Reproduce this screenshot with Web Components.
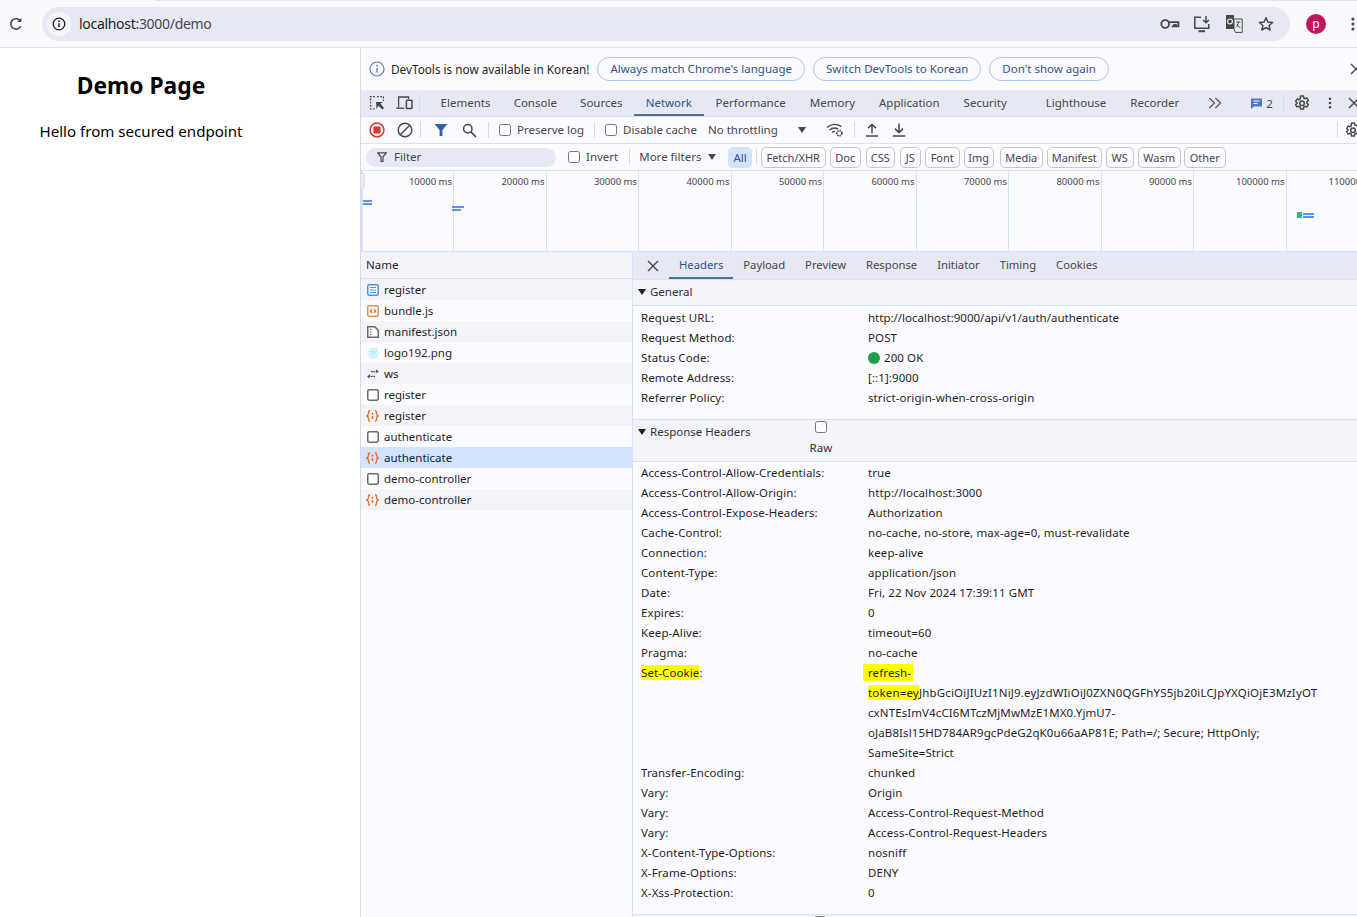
<!DOCTYPE html>
<html lang="en">
<head>
<meta charset="utf-8">
<title>Demo Page</title>
<style>
  html, body { margin: 0; height: 100%; overflow: hidden; background: #fff; }
  body { display: flex; flex-direction: column; width: 1357px; height: 917px; font-family: "Noto Sans", "Noto Sans CJK KR", sans-serif; }
  .main { display: flex; flex: 1; min-height: 0; }
</style>
</head>
<body>
<script>
const ICONS = {
  reload: '<svg width="16" height="16" viewBox="0 0 16 16" fill="none" stroke="#474747" stroke-width="1.6"><path d="M12.6 10.4A5.2 5.2 0 1 1 12 4.6"/><path d="M13.4 1.8v4.2H9.2z" fill="#474747" stroke="none"/></svg>',
  info: '<svg width="14" height="14" viewBox="0 0 14 14" fill="none" stroke="#1f1f1f" stroke-width="1.3"><circle cx="7" cy="7" r="5.8"/><path d="M7 6.2v4" stroke-width="1.5"/><circle cx="7" cy="4.2" r=".9" fill="#1f1f1f" stroke="none"/></svg>',
  infoblue: '<svg width="16" height="16" viewBox="0 0 16 16" fill="none" stroke="#5b7fb5" stroke-width="1.2"><circle cx="8" cy="8" r="7"/><path d="M8 7v4.6" stroke-width="1.4"/><circle cx="8" cy="4.6" r=".9" fill="#5b7fb5" stroke="none"/></svg>',
  key: '<svg width="20" height="12" viewBox="0 0 20 12" fill="none" stroke="#474747" stroke-width="1.8"><circle cx="5.2" cy="6" r="3.9"/><path d="M9 4.2h9.4v4.2h-2.4V6.8h-1.8v1.6h-2.6"/></svg>',
  install: '<svg width="18" height="18" viewBox="0 0 18 18" fill="none" stroke="#474747" stroke-width="1.5"><path d="M8 2.2H1.8v11h14V9"/><path d="M5.5 16.2h6.5" stroke-width="2"/><path d="M13 1v6.6M10.2 5l2.8 2.8L15.8 5"/></svg>',
  translate: '<svg width="18" height="20" viewBox="0 0 18 20"><path d="M1 1h7.5l1 2H9v12H1z" fill="#474747"/><circle cx="5" cy="7.4" r="2.4" fill="none" stroke="#e6e9f4" stroke-width="1.2"/><path d="M9 5h8.2v13.4H10.4L9 15z" fill="#eef0f7" stroke="#474747" stroke-width="1"/><path d="M11 8h4.4M13.4 8c-.3 2.6-1.2 4.4-2.4 5.4M12 10c.6 1.6 1.8 3 3.4 3.6" fill="none" stroke="#474747" stroke-width="1"/></svg>',
  star: '<svg width="16" height="16" viewBox="0 0 16 16" fill="none" stroke="#474747" stroke-width="1.5" stroke-linejoin="round"><path d="M8 1.8l1.9 4.2 4.6.5-3.4 3 1 4.5L8 11.7 3.9 14l1-4.5-3.4-3 4.6-.5z"/></svg>',
  dots: '<svg width="4" height="14" viewBox="0 0 4 14" fill="#474747"><circle cx="2" cy="2" r="1.6"/><circle cx="2" cy="7" r="1.6"/><circle cx="2" cy="12" r="1.6"/></svg>',
  close: '<svg width="12" height="12" viewBox="0 0 12 12" stroke="#474747" stroke-width="1.4"><path d="M1 1l10 10M11 1L1 11"/></svg>',
  inspect: '<svg width="16" height="16" viewBox="0 0 16 16" fill="none" stroke="#474747" stroke-width="1.2"><path d="M6 1.6H1.6V14H6" stroke-dasharray="1.8 1.4"/><path d="M8 1.6h6.4V6" stroke-dasharray="1.8 1.4"/><path d="M7 7l7.4 0-3 1.6L15 13l-1.6 1.6-4-3.8L7.6 14z" fill="#474747" stroke="none"/></svg>',
  device: '<svg width="17" height="16" viewBox="0 0 17 16" fill="none" stroke="#474747" stroke-width="1.3"><path d="M2.6 12.4V2h10v2"/><path d="M.2 13.2h8.2"/><rect x="10.4" y="5.2" width="5.6" height="8.4" rx=".8" stroke-width="1.5"/></svg>',
  more: '<svg width="14" height="12" viewBox="0 0 14 12" fill="none" stroke="#5f6368" stroke-width="1.4"><path d="M1.4 1l5 5-5 5M7.4 1l5 5-5 5"/></svg>',
  msg: '<svg width="11" height="11" viewBox="0 0 11 11"><path d="M0 .5h11v8H3L0 11z" fill="#4a79c2"/><path d="M2.4 3h6.2M2.4 5.4h4.2" stroke="#fff" stroke-width="1"/></svg>',
  gear: '<svg width="16" height="16" viewBox="0 0 16 16" fill="none" stroke="#474747" stroke-width="1.5" stroke-linejoin="round"><path d="M6.6 1h2.8l.4 2 1.3.7 1.9-.7 1.4 2.5-1.5 1.3v1.4l1.5 1.3-1.4 2.5-1.9-.7-1.3.7-.4 2H6.6l-.4-2-1.3-.7-1.9.7-1.4-2.5 1.5-1.3V7.8L1.6 6.5 3 4l1.9.7 1.3-.7z"/><circle cx="8" cy="8.2" r="2.3"/></svg>',
  record: '<svg width="16" height="16" viewBox="0 0 16 16"><circle cx="8" cy="8" r="6.9" fill="none" stroke="#dc362e" stroke-width="1.5"/><rect x="4.4" y="4.4" width="7.2" height="7.2" rx="1" fill="#dc362e"/></svg>',
  clear: '<svg width="16" height="16" viewBox="0 0 16 16" fill="none" stroke="#474747" stroke-width="1.4"><circle cx="8" cy="8" r="6.8"/><path d="M3.2 12.8l9.6-9.6"/></svg>',
  funnel: '<svg width="14" height="12" viewBox="0 0 14 12"><path d="M.6 0h12.8L8.4 6v6H5.6V6z" fill="#2f5fa8"/></svg>',
  search: '<svg width="15" height="15" viewBox="0 0 15 15" fill="none" stroke="#474747" stroke-width="1.5"><circle cx="5.8" cy="5.8" r="4.2"/><path d="M8.8 8.8l5.2 5.2" stroke-width="1.7"/></svg>',
  caret: '<svg width="8" height="6" viewBox="0 0 8 6"><path d="M0 0h8L4 6z" fill="#474747"/></svg>',
  wifi: '<svg width="18" height="14" viewBox="0 0 18 14" fill="none" stroke="#474747" stroke-width="1.4"><path d="M1 4.4C5 .6 11 .4 15.4 3.6M3.6 7c2.6-2.2 5.6-2.4 8.4-1M6.2 9.4c.8-.7 1.6-1 2.6-1"/><circle cx="13.4" cy="10.2" r="2.6" stroke-width="1.6" stroke-dasharray="1.6 .8"/></svg>',
  upload: '<svg width="14" height="14" viewBox="0 0 14 14" fill="none" stroke="#474747" stroke-width="1.5"><path d="M7 10.4V1.4M3 5.2l4-4 4 4M.8 13h12.4"/></svg>',
  download: '<svg width="14" height="14" viewBox="0 0 14 14" fill="none" stroke="#474747" stroke-width="1.5"><path d="M7 .6v9M3 5.6l4 4 4-4M.8 13h12.4"/></svg>',
  funnelline: '<svg width="10" height="10" viewBox="0 0 10 10" fill="none" stroke="#474747" stroke-width="1.2"><path d="M.6.8h8.8L6 4.8V9.6H4V4.8z"/></svg>',
  doc: '<svg width="12" height="12" viewBox="0 0 12 12"><rect x=".75" y=".75" width="10.5" height="10.5" rx="1.4" fill="#fff" stroke="#4f8df5" stroke-width="1.5"/><path d="M2.8 3.5h6.4M2.8 6h6.4M2.8 8.5h6.4" stroke="#4f8df5" stroke-width="1.2"/></svg>',
  script: '<svg width="12" height="12" viewBox="0 0 12 12"><rect x=".75" y=".75" width="10.5" height="10.5" rx="1.4" fill="#fff" stroke="#ee8a5b" stroke-width="1.5"/><path d="M5 4L3.2 6 5 8M7 4l1.8 2L7 8" fill="none" stroke="#e8642c" stroke-width="1.2"/></svg>',
  manifest: '<svg width="12" height="12" viewBox="0 0 12 12"><path d="M.75 11.25V.75h7l3.5 3.5v7z" fill="#fff" stroke="#6a6a6a" stroke-width="1.5"/><path d="M3 3.4h1.6M3 6h1.6M3 8.6h1.6" stroke="#6a6a6a" stroke-width="1"/></svg>',
  react: '<svg width="12" height="12" viewBox="0 0 12 12" fill="none" stroke="#b8ebf7" stroke-width=".9"><ellipse cx="6" cy="6" rx="5.4" ry="2.2"/><ellipse cx="6" cy="6" rx="5.4" ry="2.2" transform="rotate(60 6 6)"/><ellipse cx="6" cy="6" rx="5.4" ry="2.2" transform="rotate(120 6 6)"/><circle cx="6" cy="6" r="1.2" fill="#b8ebf7"/></svg>',
  socket: '<svg width="12" height="10" viewBox="0 0 12 10" fill="none" stroke="#474747" stroke-width="1.1"><path d="M4 2.6h7M9 .8l2 1.8-2 1.8" stroke-dasharray="1.8 .7"/><path d="M8 7.4H1M3 5.6L1 7.4l2 1.8" stroke-dasharray="1.8 .7"/></svg>',
  blank: '<svg width="12" height="12" viewBox="0 0 12 12"><rect x=".75" y=".75" width="10.5" height="10.5" rx="1.4" fill="#fff" stroke="#6a6a6a" stroke-width="1.5"/></svg>',
  fetch: '<svg width="13" height="12" viewBox="0 0 13 12" fill="none" stroke="#e8702f" stroke-width="1.4"><path d="M4 .8C2.2.8 2.6 2.4 2.4 4 2.3 5 1.8 5.6.8 6c1 .4 1.5 1 1.6 2 .2 1.6-.2 3.2 1.6 3.2M9 .8c1.8 0 1.4 1.6 1.6 3.2.1 1 .6 1.6 1.6 2-1 .4-1.5 1-1.6 2-.2 1.6.2 3.2-1.6 3.2"/><circle cx="6.5" cy="3.8" r="1" fill="#e8702f" stroke="none"/><path d="M6.5 6v3" stroke-width="1.6"/></svg>'
};

// small base so every element gets an open shadow root from the same place
class ShadowEl extends HTMLElement {
  constructor() {
    super();
    this.shadowDOM = this.attachShadow({ mode: 'open' });
  }
  connectedCallback() {
    this.render();
  }
}

class DtIcon extends ShadowEl {
  render() {
    this.shadowDOM.innerHTML = `
      <style>:host { display: inline-flex; align-items: center; justify-content: center; flex: none; } svg { display: block; }</style>
      ${ICONS[this.getAttribute('name')] || ''}
    `;
  }
}

class BrowserBar extends ShadowEl {
  render() {
    this.shadowDOM.innerHTML = `
      <style>
        :host { display: flex; align-items: center; flex: none; height: 47px; background: linear-gradient(90deg, #f9f9fe 155px, #dfe8fa 155px) top / 100% 1px no-repeat, #f9f9fe; border-bottom: 1px solid #e3e4ea; padding-left: 8px; overflow: hidden; }
        .reload { width: 16px; margin-right: 18px; }
        .omni { display: flex; align-items: center; width: 1248px; height: 34px; border-radius: 17px; background: #e6e9f4; padding: 0 16px 0 5px; box-sizing: border-box; }
        .chip { width: 24px; height: 24px; border-radius: 50%; background: #f5f6fb; display: flex; align-items: center; justify-content: center; margin-right: 8px; }
        .url { flex: 1; font-size: 14px; color: #1f1f1f; letter-spacing: -.3px; }
        .url span { color: #474747; }
        .acts { display: flex; align-items: center; gap: 14px; }
        .avatar { width: 20px; height: 20px; border-radius: 50%; background: #c2185b; color: #fff; font-size: 12px; line-height: 18px; display: flex; align-items: center; justify-content: center; margin-left: 16px; }
        .kebab { margin-left: 25px; }
      </style>
      <dt-icon class="reload" name="reload"></dt-icon>
      <div class="omni">
        <span class="chip"><dt-icon name="info"></dt-icon></span>
        <span class="url">localhost<span>:3000/demo</span></span>
        <span class="acts">
          <dt-icon name="key" style="margin-right:-1px"></dt-icon>
          <dt-icon name="install"></dt-icon>
          <dt-icon name="translate"></dt-icon>
          <dt-icon name="star" style="margin-left:1px"></dt-icon>
        </span>
      </div>
      <span class="avatar">p</span>
      <dt-icon class="kebab" name="dots"></dt-icon>
    `;
  }
}

class DemoPage extends ShadowEl {
  render() {
    this.shadowDOM.innerHTML = `
      <style>
        :host { display: block; flex: none; width: 360px; box-sizing: border-box; color: #000; background: #fff; }
        .wrap { width: 282px; text-align: center; padding-top: 22px; }
        h1 { font-size: 22.8px; line-height: 31px; margin: 0; font-weight: 700; }
        p { font-size: 15.1px; line-height: 22px; margin: 19px 0 0; }
      </style>
      <div class="wrap"><h1><slot name="title"></slot></h1><p><slot></slot></p></div>
    `;
  }
}

class InfoBar extends ShadowEl {
  render() {
    this.shadowDOM.innerHTML = `
      <style>
        :host { display: flex; align-items: center; flex: none; height: 42px; padding-left: 8px; background: #fcfbff; font-size: 11.75px; color: #1f1f1f; white-space: nowrap; overflow: hidden; }
        .msg { margin: 0 8px 0 6px; }
        button { font: inherit; font-size: 11.5px; height: 24px; padding: 0 12px 2px; margin-right: 8px; border: 1px solid #a8c7fa; border-radius: 12px; background: transparent; color: #33538a; }
        .x { position: absolute; left: 1350px; }
      </style>
      <dt-icon name="infoblue"></dt-icon>
      <span class="msg">DevTools is now available in Korean!</span>
      <button>Always match Chrome's language</button>
      <button>Switch DevTools to Korean</button>
      <button>Don't show again</button>
      <dt-icon class="x" name="close"></dt-icon>
    `;
  }
}

class MainTabs extends ShadowEl {
  render() {
    const tabs = ['Elements', 'Console', 'Sources', 'Network', 'Performance', 'Memory', 'Application', 'Security'];
    this.shadowDOM.innerHTML = `
      <style>
        :host { display: flex; align-items: center; flex: none; height: 27px; box-sizing: border-box; background: #e6e9f4; border-bottom: 1px solid #d3e3fd; font-size: 11.5px; color: #474747; white-space: nowrap; overflow: hidden; padding-left: 8px; }
        .ic { display: flex; gap: 11px; width: 48px; align-items: center; }
        .sep { width: 1px; height: 16px; background: #d3dbe9; margin: 0 9px 0 6px; flex: none; }
        .t { height: 26px; line-height: 26px; padding: 0 12px; box-sizing: border-box; }
        .tight { padding: 0 11.6px; }
        .on { color: #33538a; border-bottom: 2px solid #4f6fa5; }
      </style>
      <span class="ic"><dt-icon name="inspect"></dt-icon><dt-icon name="device"></dt-icon></span>
      <span class="sep"></span>
      ${tabs.map((t, i) => `<span class="t ${i < 4 ? 'tight' : ''} ${t === 'Network' ? 'on' : ''}">${t}</span>`).join('')}
      <span class="t" style="margin-left:15px">Lighthouse</span>
      <span class="t">Recorder</span>
      <dt-icon name="more" style="margin-left:17px"></dt-icon>
      <dt-icon name="msg" style="margin-left:29px"></dt-icon>
      <span style="margin-left:4px">2</span>
      <span class="sep" style="margin:0 10px"></span>
      <dt-icon name="gear"></dt-icon>
      <dt-icon name="dots" style="margin-left:18px;transform:scale(.85)"></dt-icon>
      <dt-icon name="close" style="margin-left:16px"></dt-icon>
    `;
  }
}

class NetToolbar extends ShadowEl {
  render() {
    this.shadowDOM.innerHTML = `
      <style>
        :host { display: flex; align-items: center; flex: none; height: 27px; box-sizing: border-box; background: #fcfbff; border-bottom: 1px solid #d3e3fd; padding-left: 8px; font-size: 11.5px; color: #474747; white-space: nowrap; overflow: hidden; }
        .sep { width: 1px; height: 16px; background: #d3dbe9; flex: none; }
        input { margin: 0 6px 0 0; width: 12px; height: 12px; }
        label { display: flex; align-items: center; }
        .txt { padding-bottom: 2px; }
      </style>
      <dt-icon name="record"></dt-icon>
      <dt-icon name="clear" style="margin-left:12px"></dt-icon>
      <span class="sep" style="margin:0 13px 0 7px"></span>
      <dt-icon name="funnel"></dt-icon>
      <dt-icon name="search" style="margin-left:14px"></dt-icon>
      <span class="sep" style="margin:0 10px 0 11px"></span>
      <label><input type="checkbox"><span class="txt">Preserve log</span></label>
      <span class="sep" style="margin:0 10px"></span>
      <label><input type="checkbox"><span class="txt">Disable cache</span></label>
      <span class="txt" style="margin-left:11px">No throttling</span>
      <dt-icon name="caret" style="margin-left:20px"></dt-icon>
      <dt-icon name="wifi" style="margin-left:20px"></dt-icon>
      <span class="sep" style="margin:0 10px"></span>
      <dt-icon name="upload"></dt-icon>
      <dt-icon name="download" style="margin-left:13px"></dt-icon>
      <span class="sep" style="position:absolute;left:1337px"></span>
      <dt-icon name="gear" style="position:absolute;left:1345px"></dt-icon>
    `;
  }
}

class NetFilter extends ShadowEl {
  render() {
    // width and left gap of each chip
    const chips = [['Fetch/XHR', 65, 0], ['Doc', 31, 4], ['CSS', 29, 5], ['JS', 21, 5], ['Font', 35, 4], ['Img', 30, 4], ['Media', 43, 6], ['Manifest', 55, 4], ['WS', 28, 4], ['Wasm', 43, 4], ['Other', 42, 3]];
    this.shadowDOM.innerHTML = `
      <style>
        :host { display: flex; align-items: center; flex: none; height: 27px; box-sizing: border-box; background: #fcfbff; border-bottom: 1px solid #d3e3fd; padding-left: 5px; font-size: 11.5px; color: #474747; white-space: nowrap; overflow: hidden; }
        .box { display: flex; align-items: center; width: 190px; height: 19px; border-radius: 10px; background: #e6e9f4; padding-left: 11px; box-sizing: border-box; gap: 7px; }
        .sep { width: 1px; height: 16px; background: #d3dbe9; flex: none; }
        input { margin: 0 6px 0 0; width: 12px; height: 12px; }
        label { display: flex; align-items: center; margin-left: 12px; }
        .txt { padding-bottom: 2px; }
        .all { height: 21px; line-height: 21px; padding: 0 5px; border-radius: 5px; background: #d3e3fd; color: #33538a; margin-left: 12px; box-sizing: border-box; }
        .chips { display: flex; font-size: 11px; }
        .c { height: 21px; line-height: 19px; text-align: center; box-sizing: border-box; border: 1px solid #c7c7c7; border-radius: 5px; }
      </style>
      <div class="box"><dt-icon name="funnelline"></dt-icon><span class="txt">Filter</span></div>
      <label><input type="checkbox"><span class="txt">Invert</span></label>
      <span class="sep" style="margin:0 9px 0 11px"></span>
      <span class="txt">More filters</span>
      <dt-icon name="caret" style="margin-left:7px"></dt-icon>
      <span class="all">All</span>
      <span class="sep" style="margin:0 4px"></span>
      <span class="chips">${chips.map(([c, w, g]) => `<span class="c" style="width:${w}px;margin-left:${g}px">${c}</span>`).join('')}</span>
    `;
  }
}

class NetOverview extends ShadowEl {
  render() {
    const labels = [];
    for (let i = 1; i <= 12; i++) labels.push(i * 10000);
    this.shadowDOM.innerHTML = `
      <style>
        :host { display: flex; flex: none; position: relative; height: 81px; box-sizing: border-box; border-bottom: 1px solid #d3e3fd; background: #fcfbff; font-size: 9.5px; color: #474747; white-space: nowrap; overflow: hidden; }
        .cell { flex: none; width: 92.5px; box-sizing: border-box; border-right: 1px solid #d3e3fd; text-align: right; padding: 4px 1px 0 0; line-height: 14px; }
        .first { width: 93px; border-left: 2px solid #d3e3fd; }
        .mark { position: absolute; height: 2px; background: #5b93ee; }
        .grab { position: absolute; left: 0; top: 2px; width: 4px; height: 16px; background: #e6e9f4; border: 1px solid #d3e3fd; border-left: 0; border-radius: 0 2px 2px 0; box-sizing: border-box; }
      </style>
      ${labels.map((l, i) => `<div class="cell ${i ? '' : 'first'}">${l} ms</div>`).join('')}
      <span class="grab"></span>
      <span class="mark" style="left:2px;top:29px;width:9px"></span>
      <span class="mark" style="left:2px;top:32px;width:9px"></span>
      <span class="mark" style="left:91px;top:35px;width:12px"></span>
      <span class="mark" style="left:91px;top:38px;width:9px"></span>
      <span class="mark" style="left:936px;top:41px;width:5px;height:6px;background:#35b58c"></span>
      <span class="mark" style="left:942px;top:42px;width:11px"></span>
      <span class="mark" style="left:942px;top:45px;width:11px"></span>
    `;
  }
}

class NetList extends ShadowEl {
  render() {
    this.shadowDOM.innerHTML = `
      <style>
        :host { display: block; flex: none; width: 272px; box-sizing: border-box; border-right: 1px solid #d3e3fd; background: #fcfbff; font-size: 11.5px; color: #1f1f1f; overflow: hidden; }
        .head { height: 27px; line-height: 25px; box-sizing: border-box; border-bottom: 1px solid #d3e3fd; background: #f2f4f9; padding-left: 5px; }
        ::slotted(net-row:nth-child(odd)) { background: #f2f4f9; }
      </style>
      <div class="head">Name</div>
      <slot></slot>
    `;
  }
}

class NetRow extends ShadowEl {
  render() {
    const sel = this.hasAttribute('selected');
    this.shadowDOM.innerHTML = `
      <style>
        :host { display: flex; align-items: center; height: 21px; padding-left: 5px; box-sizing: border-box; white-space: nowrap; ${sel ? 'background: #d3e3fd !important; color: #041e49;' : ''} }
        dt-icon { width: 13px; margin-right: 5px; }
      </style>
      <dt-icon name="${this.getAttribute('icon')}"></dt-icon><slot></slot>
    `;
  }
}

class DetailPane extends ShadowEl {
  render() {
    const tabs = ['Headers', 'Payload', 'Preview', 'Response', 'Initiator', 'Timing', 'Cookies'];
    this.shadowDOM.innerHTML = `
      <style>
        :host { display: block; flex: 1; min-width: 0; background: #fcfbff; font-size: 11.5px; color: #1f1f1f; overflow: hidden; }
        .tabs { display: flex; align-items: center; height: 28px; box-sizing: border-box; background: #e6e9f4; border-bottom: 1px solid #d3e3fd; color: #474747; font-size: 11.25px; }
        .x { margin: 0 10px 0 14px; }
        .t { height: 27px; line-height: 25px; padding: 0 10px; box-sizing: border-box; }
        .on { color: #33538a; border-bottom: 2px solid #4f6fa5; }
      </style>
      <div class="tabs">
        <dt-icon class="x" name="close"></dt-icon>
        ${tabs.map((t, i) => `<span class="t ${i ? '' : 'on'}">${t}</span>`).join('')}
      </div>
      <slot></slot>
    `;
  }
}

class HeaderSection extends ShadowEl {
  render() {
    const raw = this.hasAttribute('raw');
    const heading = this.getAttribute('heading');
    this.shadowDOM.innerHTML = `
      <style>
        :host { display: block; border-bottom: 1px solid #d3e3fd; }
        .title { display: flex; align-items: center; height: ${raw ? 42 : 26}px; box-sizing: border-box; background: #f2f4f9; border-bottom: 1px solid #d3e3fd; padding: 0 0 2px 5px; color: #333; }
        .title span { ${raw ? 'margin-top: -16px;' : ''} }
        .tri { width: 0; height: 0; border-left: 4px solid transparent; border-right: 4px solid transparent; border-top: 6px solid #1f1f1f; margin-right: 4px; ${raw ? 'margin-top: -16px;' : ''} }
        .raw { display: ${raw ? 'flex' : 'none'}; flex-direction: column; align-items: center; align-self: flex-start; margin: 1px 0 0 59px; gap: 7px; }
        .raw input { margin: 0; width: 12px; height: 12px; }
        .raw b { font-weight: 400; line-height: 16px; }
        .body { padding: ${raw ? '1px 0 11px' : '2px 0 11px'}; }
        .stub { height: 40px; background: #f2f4f9; padding: 1px 0 0 181px; box-sizing: border-box; }
        .stub input { margin: 0; width: 12px; height: 12px; }
      </style>
      ${heading ? `
      <div class="title">
        <i class="tri"></i><span>${heading}</span>
        <div class="raw"><input type="checkbox"><b>Raw</b></div>
      </div>
      <div class="body"><slot></slot></div>` : '<div class="stub"><input type="checkbox"></div>'}
    `;
  }
}

class HeaderRow extends ShadowEl {
  render() {
    this.shadowDOM.innerHTML = `
      <style>
        :host { display: grid; grid-template-columns: 227px 1fr; padding-left: 8px; line-height: 20px; }
        .k { color: #1f1f1f; letter-spacing: .1px; }
        .v { color: #1f1f1f; white-space: nowrap; letter-spacing: .1px; }
      </style>
      <div class="k"><slot name="key">${this.getAttribute('key') || ''}:</slot></div>
      <div class="v"><slot></slot></div>
    `;
  }
}

class DevTools extends ShadowEl {
  render() {
    this.shadowDOM.innerHTML = `
      <style>
        :host { display: flex; flex-direction: column; flex: 1; min-width: 0; border-left: 1px solid #d3dbe9; box-sizing: border-box; overflow: hidden; }
        .split { display: flex; flex: 1; min-height: 0; }
      </style>
      <info-bar></info-bar>
      <main-tabs></main-tabs>
      <net-toolbar></net-toolbar>
      <net-filter></net-filter>
      <net-overview></net-overview>
      <div class="split"><slot></slot></div>
    `;
  }
}

customElements.define('dt-icon', DtIcon);
customElements.define('browser-bar', BrowserBar);
customElements.define('demo-page', DemoPage);
customElements.define('info-bar', InfoBar);
customElements.define('main-tabs', MainTabs);
customElements.define('net-toolbar', NetToolbar);
customElements.define('net-filter', NetFilter);
customElements.define('net-overview', NetOverview);
customElements.define('net-list', NetList);
customElements.define('net-row', NetRow);
customElements.define('detail-pane', DetailPane);
customElements.define('header-section', HeaderSection);
customElements.define('header-row', HeaderRow);
customElements.define('dev-tools', DevTools);

const H = (k, v) => `<header-row key="${k}">${v}</header-row>`;
const Y = 'background:#ffff00';
document.body.insertAdjacentHTML('beforeend', `
  <browser-bar></browser-bar>
  <div class="main">
    <demo-page><span slot="title">Demo Page</span>Hello from secured endpoint</demo-page>
    <dev-tools>
      <net-list>
        <net-row icon="doc">register</net-row>
        <net-row icon="script">bundle.js</net-row>
        <net-row icon="manifest">manifest.json</net-row>
        <net-row icon="react">logo192.png</net-row>
        <net-row icon="socket">ws</net-row>
        <net-row icon="blank">register</net-row>
        <net-row icon="fetch">register</net-row>
        <net-row icon="blank">authenticate</net-row>
        <net-row icon="fetch" selected>authenticate</net-row>
        <net-row icon="blank">demo-controller</net-row>
        <net-row icon="fetch">demo-controller</net-row>
      </net-list>
      <detail-pane>
        <header-section heading="General">
          ${H('Request URL', '<span style="letter-spacing:0">http://localhost:9000/api/v1/auth/authenticate</span>')}
          ${H('Request Method', 'POST')}
          ${H('Status Code', '<span style="display:inline-block;width:12px;height:12px;border-radius:50%;background:#1e9e48;vertical-align:-2px;margin-right:4px"></span>200 OK')}
          ${H('Remote Address', '[::1]:9000')}
          ${H('Referrer Policy', 'strict-origin-when-cross-origin')}
        </header-section>
        <header-section heading="Response Headers" raw>
          ${H('Access-Control-Allow-Credentials', 'true')}
          ${H('Access-Control-Allow-Origin', 'http://localhost:3000')}
          ${H('Access-Control-Expose-Headers', 'Authorization')}
          ${H('Cache-Control', 'no-cache, no-store, max-age=0, must-revalidate')}
          ${H('Connection', 'keep-alive')}
          ${H('Content-Type', 'application/json')}
          ${H('Date', 'Fri, 22 Nov 2024 17:39:11 GMT')}
          ${H('Expires', '0')}
          ${H('Keep-Alive', 'timeout=60')}
          ${H('Pragma', 'no-cache')}
          <header-row><span slot="key"><span style="${Y}">Set-Cookie</span>:</span><span style="${Y};padding:1px 2px 1px 0;box-shadow:-5px 0 0 #ffff00">refresh-</span><br><span style="letter-spacing:.17px"><span style="${Y}">token=ey</span>JhbGciOiJIUzI1NiJ9.eyJzdWIiOiJ0ZXN0QGFhYS5jb20iLCJpYXQiOjE3MzIyOT</span><br>cxNTEsImV4cCI6MTczMjMwMzE1MX0.YjmU7-<br>oJaB8Isl15HD784AR9gcPdeG2qK0u66aAP81E; Path=/; Secure; HttpOnly;<br>SameSite=Strict</header-row>
          ${H('Transfer-Encoding', 'chunked')}
          ${H('Vary', 'Origin')}
          ${H('Vary', 'Access-Control-Request-Method')}
          ${H('Vary', 'Access-Control-Request-Headers')}
          ${H('X-Content-Type-Options', 'nosniff')}
          ${H('X-Frame-Options', 'DENY')}
          ${H('X-Xss-Protection', '0')}
        </header-section>
        <header-section></header-section>
      </detail-pane>
    </dev-tools>
  </div>
`);
</script>
</body>
</html>
